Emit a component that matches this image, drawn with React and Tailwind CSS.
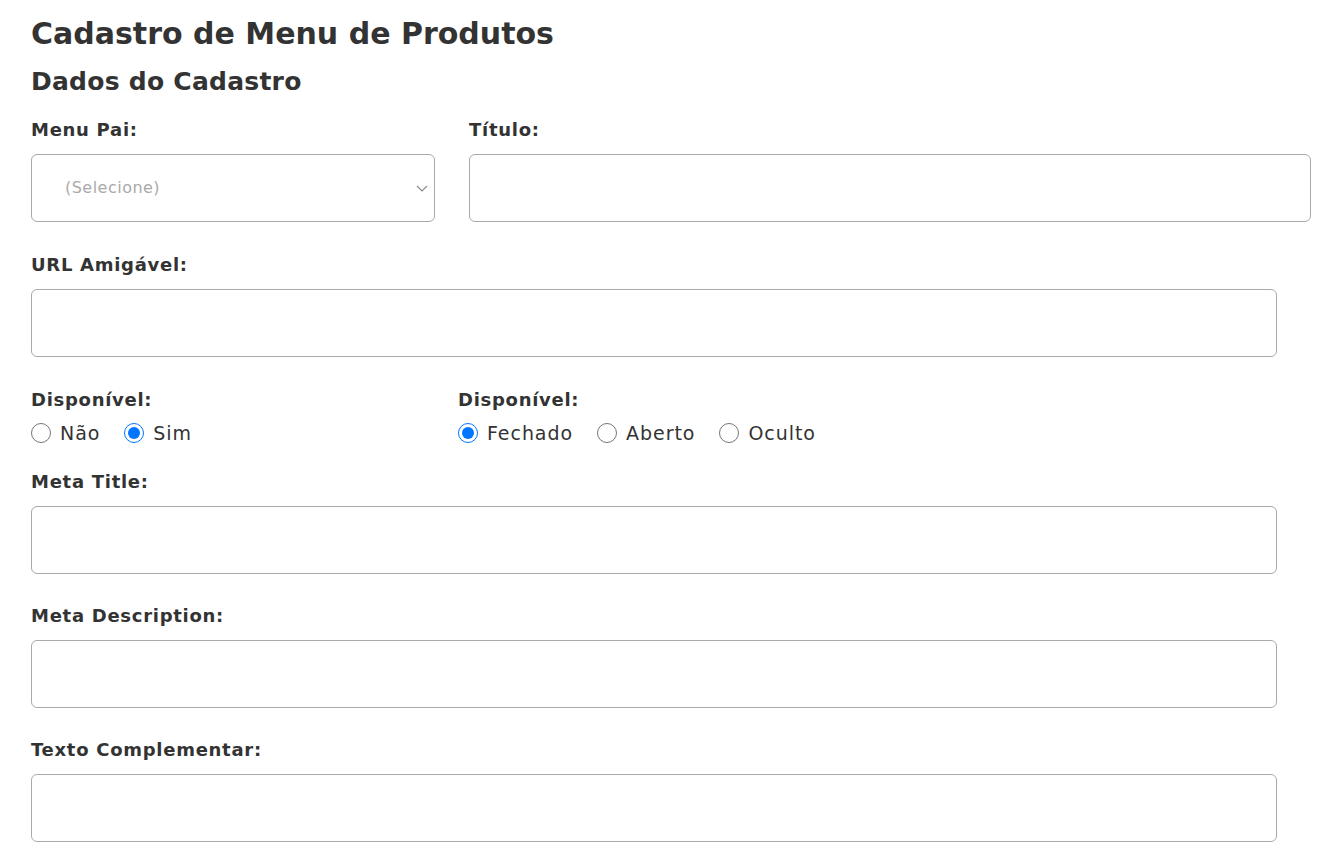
import React, { useState } from "react";

const font = { fontFamily: '"DejaVu Sans", "Open Sans", sans-serif' };

const Label = ({ children }) => (
  <p className="text-[18px] font-semibold text-[#333] leading-6 tracking-[0.04em]">{children}</p>
);

const TextField = ({ className = "" }) => (
  <input className={`h-[68px] rounded-md border border-[#aaa] bg-white px-4 text-base text-[#333] focus:outline-none ${className}`} />
);

const Radio = ({ name, label, checked, onChange }) => (
  <label className="flex items-center gap-[9px] cursor-pointer">
    <input type="radio" name={name} checked={checked} onChange={onChange} className="w-5 h-5 m-0 accent-[#0075ff]" />
    <span className="text-[19px] text-[#333] leading-6 tracking-[0.05em]">{label}</span>
  </label>
);

const App = () => {
  const [disp, setDisp] = useState("sim");
  const [estado, setEstado] = useState("fechado");

  return (
    <div className="min-h-screen bg-white pl-[31px] pt-[14px] pb-2" style={font}>
      <h1 className="text-[30px] font-bold text-[#333] leading-10">Cadastro de Menu de Produtos</h1>
      <h2 className="mt-[10px] text-[25px] font-semibold text-[#333] leading-9 tracking-[0.01em]">Dados do Cadastro</h2>

      <div className="mt-[18px] flex gap-[34px]">
        <div className="flex flex-col gap-3 w-[404px]">
          <Label>Menu Pai:</Label>
          <div className="relative">
            <select defaultValue="" className="appearance-none w-full h-[68px] rounded-md border border-[#aaa] bg-white pl-[33px] pr-10 text-[16px] tracking-[0.03em] text-[#aaa] focus:outline-none">
              <option value="">(Selecione)</option>
            </select>
            <svg className="absolute right-[7px] top-[31px] pointer-events-none" width="12" height="7" viewBox="0 0 12 7" fill="none" stroke="#8a8a8a" strokeWidth="1.2">
              <path d="M1 1 6 6 11 1" />
            </svg>
          </div>
        </div>
        <div className="flex flex-col gap-3 w-[842px]">
          <Label>Título:</Label>
          <TextField className="w-full" />
        </div>
      </div>

      <div className="mt-[31px] flex flex-col gap-3">
        <Label>URL Amigável:</Label>
        <TextField className="w-[1246px]" />
      </div>

      <div className="mt-[31px] flex">
        <div className="w-[427px] flex flex-col gap-[9px]">
          <Label>Disponível:</Label>
          <div className="flex items-center gap-[24px]">
            <Radio name="disp" label="Não" checked={disp === "nao"} onChange={() => setDisp("nao")} />
            <Radio name="disp" label="Sim" checked={disp === "sim"} onChange={() => setDisp("sim")} />
          </div>
        </div>
        <div className="flex flex-col gap-[9px]">
          <Label>Disponível:</Label>
          <div className="flex items-center gap-[24px]">
            <Radio name="estado" label="Fechado" checked={estado === "fechado"} onChange={() => setEstado("fechado")} />
            <Radio name="estado" label="Aberto" checked={estado === "aberto"} onChange={() => setEstado("aberto")} />
            <Radio name="estado" label="Oculto" checked={estado === "oculto"} onChange={() => setEstado("oculto")} />
          </div>
        </div>
      </div>

      <div className="mt-[25px] flex flex-col gap-3">
        <Label>Meta Title:</Label>
        <TextField className="w-[1246px]" />
      </div>

      <div className="mt-[30px] flex flex-col gap-3">
        <Label>Meta Description:</Label>
        <TextField className="w-[1246px]" />
      </div>

      <div className="mt-[30px] flex flex-col gap-3">
        <Label>Texto Complementar:</Label>
        <TextField className="w-[1246px]" />
      </div>
    </div>
  );
};

export default App;
